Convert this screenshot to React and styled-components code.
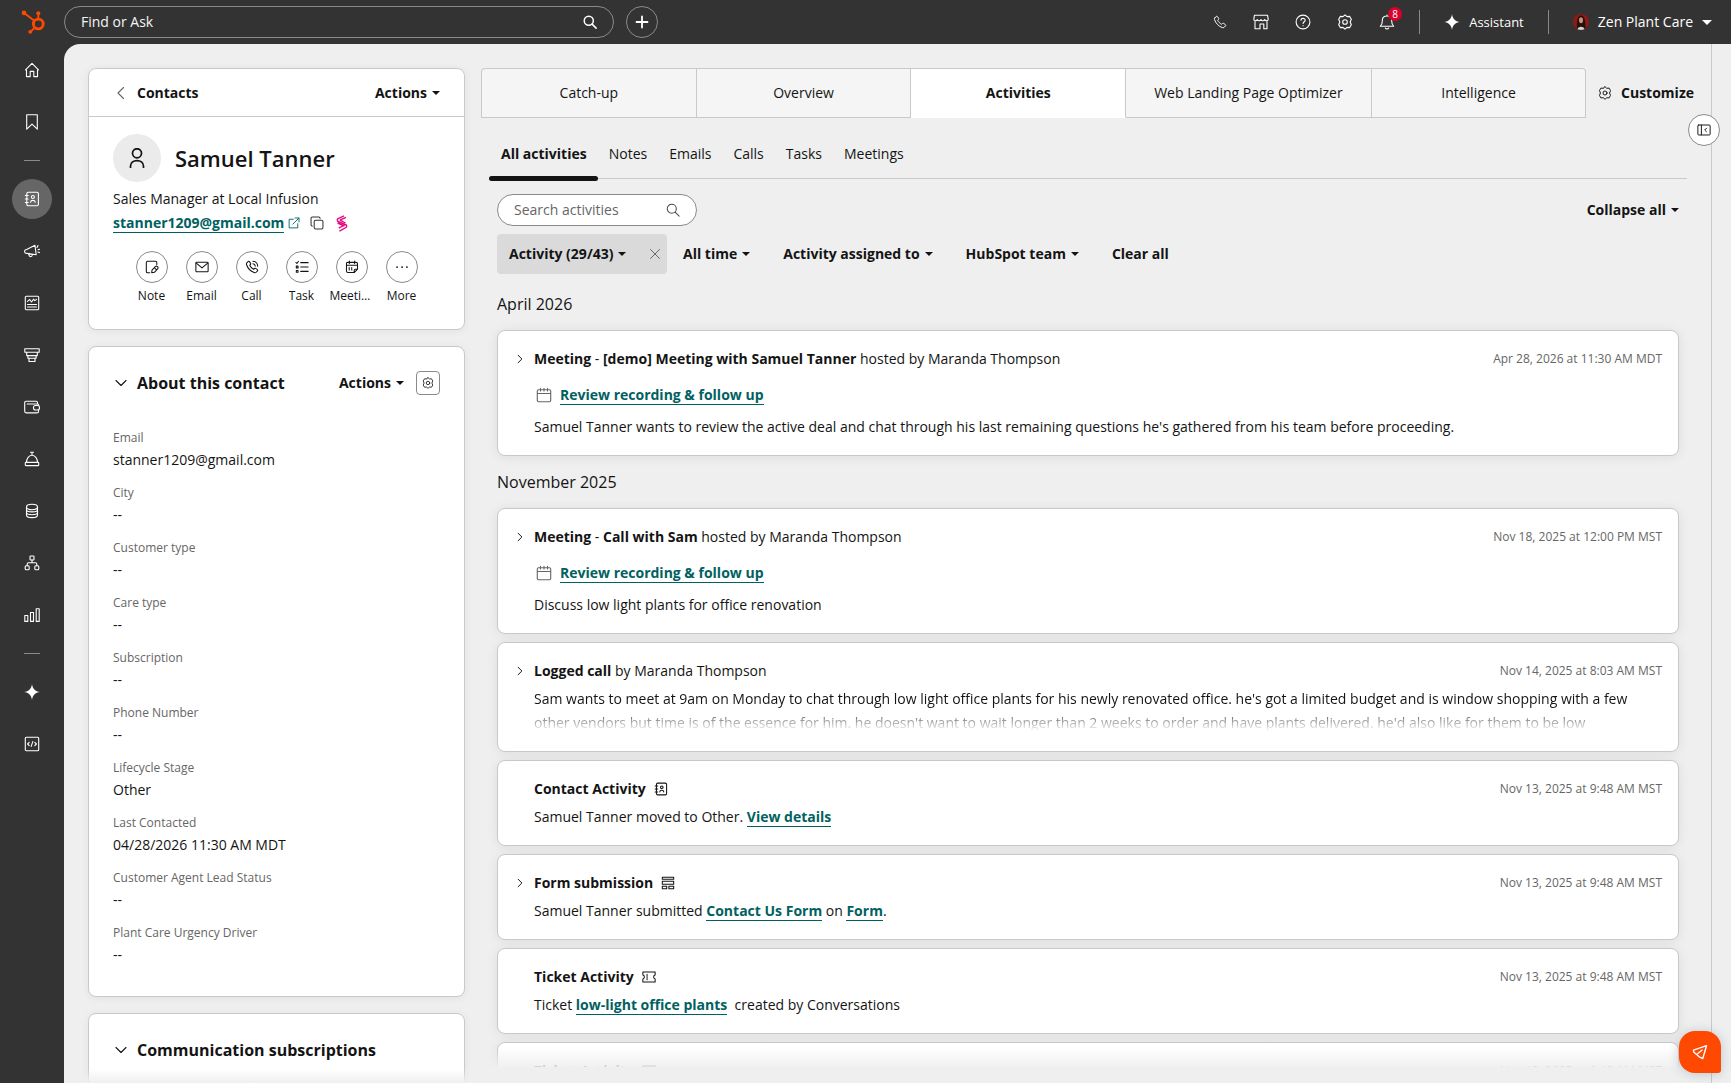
import React, { useState } from 'react'
import styled, { createGlobalStyle, css } from 'styled-components'

const GlobalStyle = createGlobalStyle`
    * {
        box-sizing: border-box;
    }
    body {
        margin: 0;
        background-color: #333;
        color: #141414;
        font: 400 14px/24px "Open Sans", "Noto Sans", sans-serif;
    }
    button, input {
        font: inherit;
        color: inherit;
    }
    button {
        padding: 0;
        border: 0;
        background: none;
        cursor: pointer;
    }
    h1, h2, h3, p, ul, dl, dd {
        margin: 0;
        padding: 0;
    }
    ul {
        list-style: none;
    }
`

const Svg = styled.svg`
    display: block;
    flex: none;
    fill: none;
    stroke: currentColor;
    stroke-width: ${({$stroke}) => $stroke || 1.1};
    stroke-linecap: round;
    stroke-linejoin: round;
`

const gearPath = 'M8 .8 L10 2.6 L12.7 2.4 L14.3 5.2 L13.2 8 L14.3 10.8 L12.7 13.6 L10 13.4 L8 15.2 L6 13.4 L3.3 13.6 L1.7 10.8 L2.8 8 L1.7 5.2 L3.3 2.4 L6 2.6 Z'
const sparklePath = 'M8 0 C8.6 4.8 11.2 7.4 16 8 C11.2 8.6 8.6 11.2 8 16 C7.4 11.2 4.8 8.6 0 8 C4.8 7.4 7.4 4.8 8 0 Z'
const phonePath = 'M2.1 3.3 L3.6 1.7 C4 1.3 4.6 1.3 5 1.8 L6.4 3.8 C6.7 4.2 6.6 4.7 6.3 5.1 L5.4 6.1 C6.2 7.9 7.8 9.6 9.8 10.6 L10.9 9.7 C11.3 9.4 11.8 9.3 12.2 9.6 L14.1 11 C14.6 11.4 14.7 12 14.3 12.4 L12.8 14 C12.2 14.6 11.3 14.7 10.5 14.4 C6.3 12.8 3.2 9.5 1.8 5.4 C1.5 4.6 1.6 3.9 2.1 3.3 Z'

// all glyphs share a 16x16 box
const icons = {
    home: <path d="M1.5 7.8 L8 1.3 L14.5 7.8 M2.5 8 V14.6 H6.2 V9.4 H9.8 V14.6 H13.5 V8"/>,
    bookmark: <path d="M2.7 .7 H13.3 V15.2 L8 10.2 L2.7 15.2 Z"/>,
    contacts: <><rect x="2.8" y="1.3" width="11.6" height="13.4" rx="1.5"/><path d="M1.3 4.5 H4.2 M1.3 8 H4.2 M1.3 11.5 H4.2"/><circle cx="8.9" cy="6" r="1.5"/><path d="M6.6 11.3 C6.8 8.7 11 8.7 11.2 11.3"/></>,
    megaphone: <><path d="M11 2.3 L3.1 6.2 L1.2 6.9 C.4 7.3 .4 9.8 1.6 10.1 L12.2 11.7 Z M4.3 10.6 L5.5 13.2 C6.3 13.9 7.7 13.6 8 12.9 L8.2 11.3"/><path d="M13 4.5 L14 2.5 M14 6.7 L15.5 6.2 M13.9 9 L15.5 9.6"/></>,
    report: <><rect x="1.3" y="1.3" width="13.4" height="13.4" rx="1"/><path d="M3.5 6.4 L5.7 4.5 L7.5 7 L9.5 4.2 L10.8 5.6 L12.6 4.4 M3.5 9.5 H12.5 M3.5 12 H12.5"/></>,
    funnel: <path d="M.8 1.8 H15.2 V5.2 H.8 Z M2.7 5.2 H13.3 V8.6 H2.7 Z M3.9 8.6 H12.1 V11.2 H3.9 Z M5 11.2 H11 V14.5 H5 Z"/>,
    wallet: <><path d="M13.5 5 V3.6 C13.5 2.7 13 2.2 12.1 2.2 H2.2 C1.2 2.2 .7 2.8 .7 3.6 V12.3 C.7 13.3 1.3 13.9 2.2 13.9 H13 C13.9 13.9 14.5 13.3 14.5 12.5 V11 M3.2 5 H13.5 C14.3 5 14.7 5.5 14.7 6.5"/><rect x="9.5" y="6.5" width="6" height="4.5" rx="2"/></>,
    service: <><path d="M2.5 11.4 C2.5 8 4.5 4.3 8 4.3 C11.5 4.3 13.5 8 13.5 11.4 M8 4.3 V1.3 M6.5 1.2 H9.5"/><rect x="1.3" y="11.4" width="13.4" height="3.2" rx=".7"/></>,
    database: <><ellipse cx="8" cy="4" rx="5.5" ry="2.7"/><path d="M2.5 4 V12 C2.5 15.5 13.5 15.5 13.5 12 V4 M2.5 6.8 C2.5 9.6 13.5 9.6 13.5 6.8 M2.5 9.6 C2.5 12.5 13.5 12.5 13.5 9.6"/></>,
    workflow: <><rect x="6" y="1" width="4" height="4" rx=".7"/><rect x="1.2" y="10.8" width="4" height="4" rx="1"/><rect x="10.8" y="10.8" width="4" height="4" rx="1"/><path d="M8 5 V7.8 M3.2 10.8 V9.2 C3.2 8.3 3.6 7.8 4.5 7.8 H11.5 C12.4 7.8 12.8 8.3 12.8 9.2 V10.8"/></>,
    bars: <path d="M.8 8.5 H3.8 V14.4 H.8 Z M6.5 5.5 H9.5 V14.4 H6.5 Z M12.2 1.8 H15.2 V14.4 H12.2 Z"/>,
    sparkle: <path d={sparklePath} fill="currentColor" stroke="none"/>,
    code: <><rect x="1.3" y="1.3" width="13.4" height="13.4" rx="1"/><path d="M5.2 6.3 L3.6 8 L5.2 9.7 M10.8 6.3 L12.4 8 L10.8 9.7 M8.8 5.6 L7.2 10.4"/></>,
    phone: <path d={phonePath}/>,
    call: <><path d={phonePath}/><path d="M9 1.5 C12 1.6 14.3 3.9 14.5 7 M9 4.3 C10.5 4.5 11.5 5.5 11.7 7"/></>,
    store: <path d="M1.5 1.2 H14.5 L15.2 5.2 C15.2 7.2 12.2 7.2 11.7 5.5 C11.2 7.2 8.5 7.2 8 5.5 C7.5 7.2 4.8 7.2 4.3 5.5 C3.8 7.2 .8 7.2 .8 5.2 Z M2 7.5 V14.7 H7 V10 H10.8 V14.7 H14 V7.5"/>,
    help: <><circle cx="8" cy="8" r="6.9"/><path d="M6 6.3 C6 3.7 10.2 3.8 10.2 6.2 C10.2 7.8 8.1 7.8 8.1 9.5 M8.1 11.6 V11.7"/></>,
    gear: <><path d={gearPath}/><circle cx="8" cy="8" r="2.3"/></>,
    bell: <><path d="M1.3 12.3 C3.5 10.8 3.3 9 3.3 6.5 C3.3 3.8 5.2 2 8 2 C10.8 2 12.7 3.8 12.7 6.5 C12.7 9 12.5 10.8 14.7 12.3 Z M8 2 V1 M6.3 14 C7 15.2 9 15.2 9.7 14"/></>,
    search: <><circle cx="6.6" cy="6.6" r="5.2"/><path d="M10.4 10.4 L15 15"/></>,
    plus: <path d="M8 2.5 V13.5 M2.500 8 H13.5"/>,
    back: <path d="M10.5 2.5 L5 8 L10.5 13.5"/>,
    next: <path d="M5.5 3 L10.5 8 L5.5 13"/>,
    down: <path d="M3 5.5 L8 10.5 L13 5.5"/>,
    close: <path d="M2 2 L14 14 M14 2 L2 14"/>,
    person: <><ellipse cx="8" cy="4.2" rx="3.6" ry="3.6"/><path d="M2.8 15.5 V14.5 C2.8 8.5 13.2 8.5 13.2 14.5 V15.5"/></>,
    external: <path d="M7 3 H1.5 V14.5 H13 V9 M6.5 9.5 L14.5 1.5 M9.5 1.3 H14.7 V6.5"/>,
    copy: <><rect x="4.8" y="4.8" width="10" height="10" rx="1.6"/><path d="M2.7 11.5 C1.7 11.5 1.2 11 1.2 10 V2.7 C1.2 1.7 1.7 1.2 2.7 1.2 H10 C11 1.2 11.5 1.7 11.5 2.7"/></>,
    note: <><path d="M13.5 5 V3 C13.5 2 13 1.5 12 1.5 H3 C2 1.5 1.5 2 1.5 3 V13 C1.5 14 2 14.5 3 14.5 H5.5"/><path d="M8 11.5 L12 7.3 C13.6 6.4 15.6 8.3 14.7 9.9 L10.7 14.1 L7.700 14.6 Z M10.6 8.7 L13.3 11.4"/></>,
    email: <><rect x="1" y="2.5" width="14" height="11" rx="1"/><path d="M1.5 3.5 L8 9 L14.5 3.5"/></>,
    task: <><path d="M6.5 3 H15 M6.5 8 H15 M6.5 13 H15 M1 2.8 L2.2 4 L4 1.5"/><rect x="1.5" y="7" width="2" height="2"/><rect x="1.5" y="12" width="2" height="2"/></>,
    meeting: <><path d="M10.5 14.3 H3.3 C2.2 14.3 1.7 13.7 1.7 12.7 V4.3 C1.7 3.3 2.2 2.7 3.3 2.7 H12.7 C13.8 2.7 14.3 3.3 14.3 4.3 V10.5 L10.5 14.3 V11.8 C10.5 10.9 11 10.5 11.8 10.5 H14.3 M1.7 6 H14.3 M5 1.2 V4 M11 1.2 V4 M4.8 8.7 V11.5 M7.7 8.7 V11.5"/></>,
    more: <path d="M2.3 8 H2.4 M8 8 H8.1 M13.6 8 H13.7" strokeWidth="2"/>,
    calendar: <path d="M2.5 2.7 H13.5 C14.3 2.7 14.7 3 14.7 4 V13.5 C14.7 14.3 14.3 14.7 13.5 14.7 H2.5 C1.7 14.7 1.3 14.3 1.3 13.5 V4 C1.3 3 1.7 2.7 2.5 2.7 M1.3 6.5 H14.7 M4.5 1.3 V4 M8 1.3 V4 M11.5 1.3 V4"/>,
    form: <path d="M1.5 1.5 H14.5 V3.8 H1.5 Z M1.5 6 H14.5 V9.5 H1.5 Z M1.5 11.8 H6.5 V14.5 H1.5 Z M9 11.8 H14.5 V14.5 H9 Z"/>,
    ticket: <path d="M1 2.3 H15 V5.8 C12.7 6.3 12.7 9.7 15 10.2 V13.7 H1 V10.2 C3.3 9.7 3.3 6.3 1 5.8 Z M5.8 5 V6.2 M5.8 7.5 V8.5 M5.8 9.8 V11"/>,
    collapse: <><rect x="1" y="2.3" width="14" height="11.4" rx="1"/><path d="M5 2.5 V13.5 M10.8 6 L8.8 8 L10.8 10"/></>,
    send: <path d="M1.5 6.2 L14.5 1.7 L10.8 14.5 L7.7 13.2 L5.5 11.3 L1.7 8 Z M10.2 6 L5.8 9.5"/>
}

const Icon = ({name, size = 16, stroke}) => (
    <Svg width={size} height={size} viewBox="0 0 16 16" $stroke={stroke} aria-hidden="true">
        {icons[name]}
    </Svg>
)

const Caret = ({size = 8}) => (
    <svg width={size} height={size / 2} viewBox="0 0 8 4" aria-hidden="true">
        <path d="M0 0 H8 L4 4 Z" fill="currentColor"/>
    </svg>
)

const Page = styled.div`
    display: flex;
    flex-direction: column;
    height: 100vh;
    overflow: hidden;
`

const TopBar = styled.header`
    display: flex;
    align-items: center;
    flex: none;
    height: 44px;
    padding-right: 19px;
    color: #fff;
`

const LogoLink = styled.a`
    display: flex;
    justify-content: center;
    width: 64px;
    padding-left: 2px;
    color: #ff4800;
`

const GlobalSearch = styled.label`
    display: flex;
    align-items: center;
    width: 550px;
    height: 32px;
    padding: 0 16px;
    border: 1px solid #8a8a8a;
    border-radius: 16px;
    input {
        flex: 1;
        min-width: 0;
        padding: 0;
        border: 0;
        outline: 0;
        background: none;
    }
    input::placeholder {
        color: #f5f5f5;
        opacity: 1;
    }
`

const AddButton = styled.button`
    display: flex;
    align-items: center;
    justify-content: center;
    width: 32px;
    height: 32px;
    margin-left: 12px;
    border: 1px solid #8a8a8a;
    border-radius: 50%;
`

const TopActions = styled.div`
    display: flex;
    align-items: center;
    gap: 24px;
    margin-left: auto;
`

const TopIcons = styled.div`
    display: flex;
    align-items: center;
    gap: 26px;
`

const TopButton = styled.button`
    position: relative;
    display: flex;
    align-items: center;
    gap: 9px;
    font-size: ${({$small}) => $small ? '13px' : '14px'};
`

const Badge = styled.span`
    position: absolute;
    top: -7px;
    right: -7px;
    width: 14px;
    height: 14px;
    border-radius: 50%;
    background-color: #d9002b;
    font-size: 10px;
    line-height: 14px;
    text-align: center;
`

const TopDivider = styled.span`
    width: 1px;
    height: 24px;
    background-color: #8a8a8a;
`

const Body = styled.div`
    display: flex;
    flex: 1;
    min-height: 0;
`

const SideNav = styled.nav`
    display: flex;
    flex-direction: column;
    align-items: center;
    flex: none;
    gap: 12px;
    width: 64px;
    padding-top: 6px;
    color: #fff;
`

const NavLink = styled.a`
    display: flex;
    align-items: center;
    justify-content: center;
    width: 40px;
    height: 40px;
    border-radius: 50%;
    color: inherit;
    background-color: ${({$active}) => $active ? '#666' : 'transparent'};
`

const NavDivider = styled.span`
    width: 16px;
    height: 1px;
    margin: 6px 0;
    background-color: #8a8a8a;
`

const Content = styled.div`
    position: relative;
    display: flex;
    flex: 1;
    min-width: 0;
    border-top-left-radius: 16px;
    background-color: #efefef;
    overflow: hidden;
`

const ContactColumn = styled.aside`
    position: relative;
    display: flex;
    flex-direction: column;
    flex: none;
    gap: 16px;
    width: 417px;
    padding: 24px 16px 0 24px;
    overflow: hidden;
`

const Panel = styled.section`
    flex: none;
    border: 1px solid #c9c9c9;
    border-radius: 8px;
    background-color: #fff;
    box-shadow: 0 1px 8px rgba(20, 20, 20, .06);
`

const PanelTop = styled.div`
    display: flex;
    align-items: center;
    justify-content: space-between;
    height: 48px;
    padding: 0 24px;
    border-bottom: 1px solid #c9c9c9;
`

const BackLink = styled.a`
    display: flex;
    align-items: center;
    gap: 8px;
    color: inherit;
    font-weight: 700;
    text-decoration: none;
    svg {
        color: #666;
    }
`

const MenuButton = styled.button`
    display: inline-flex;
    align-items: center;
    gap: 5px;
    font-weight: 700;
    white-space: nowrap;
`

const Profile = styled.div`
    padding: 17px 24px 23px;
`

const NameRow = styled.div`
    display: flex;
    align-items: center;
    gap: 14px;
    margin-bottom: 5px;
`

const Avatar = styled.div`
    display: flex;
    align-items: center;
    justify-content: center;
    width: 48px;
    height: 48px;
    border-radius: 50%;
    background-color: #ebebeb;
`

const Name = styled.h1`
    font-size: 22px;
    font-weight: 600;
    line-height: 32px;
`

const EmailRow = styled.div`
    display: flex;
    align-items: center;
    height: 24px;
    color: #006162;
`

const Link = styled.a`
    border-bottom: 1px solid currentColor;
    color: #006162;
    font-weight: 700;
    line-height: 18px;
    text-decoration: none;
`

const IconButton = styled.button`
    display: flex;
    margin-left: ${({$gap}) => $gap || '0'};
    color: ${({$color}) => $color || 'inherit'};
`

const QuickActions = styled.div`
    display: flex;
    justify-content: center;
    margin-top: 16px;
`

const QuickAction = styled.button`
    display: flex;
    flex-direction: column;
    align-items: center;
    gap: 3px;
    width: 50px;
    font-size: 12px;
    line-height: 20px;
    span {
        max-width: 44px;
        overflow: hidden;
        text-overflow: ellipsis;
        white-space: nowrap;
    }
`

const Circle = styled.i`
    display: flex;
    align-items: center;
    justify-content: center;
    width: 32px;
    height: 32px;
    border: 1px solid #8a8a8a;
    border-radius: 50%;
    background-color: #fff;
`

const PanelHeader = styled.div`
    display: flex;
    align-items: center;
    gap: 12px;
    padding: 24px 24px 0;
`

const PanelTitle = styled.h2`
    flex: 1;
    font-size: 16px;
    font-weight: 700;
    line-height: 24px;
    button {
        display: flex;
        align-items: center;
        gap: 8px;
    }
`

const SquareButton = styled.button`
    display: flex;
    align-items: center;
    justify-content: center;
    width: 24px;
    height: 24px;
    border: 1px solid #8a8a8a;
    border-radius: 4px;
`

const Fields = styled.dl`
    display: flex;
    flex-direction: column;
    gap: 11px;
    padding: 33px 24px 29px;
    dt {
        color: #666;
        font-size: 12px;
        line-height: 20px;
    }
`

const Fade = styled.div`
    position: absolute;
    left: 0;
    right: 0;
    bottom: 0;
    height: 14px;
    background: linear-gradient(rgba(239, 239, 239, 0), #efefef);
    pointer-events: none;
`

const TimelineFade = styled(Fade)`
    height: 36px;
    background: linear-gradient(rgba(239, 239, 239, 0), rgba(239, 239, 239, .9) 20px, #efefef 20px);
`

const TimelineColumn = styled.main`
    position: relative;
    flex: 1;
    min-width: 0;
    padding-top: 24px;
    overflow: hidden;
`

const TabsRow = styled.div`
    display: flex;
    align-items: center;
    gap: 12px;
    padding-right: 17px;
`

const Tabs = styled.div`
    display: flex;
    flex: 1;
    height: 50px;
    border-left: 1px solid #c9c9c9;
    border-radius: 4px 4px 0 0;
`

const Tab = styled.button`
    flex: 1 1 0;
    padding: 0 28px;
    border: 1px solid #c9c9c9;
    border-left: 0;
    background-color: #f5f5f5;
    white-space: nowrap;
    &:first-child {
        border-top-left-radius: 4px;
    }
    &:last-child {
        border-top-right-radius: 4px;
    }
    ${({$active}) => $active && css`
        border-bottom-color: #fff;
        background-color: #fff;
        font-weight: 700;
    `}
`

const SubTabs = styled.div`
    display: flex;
    margin: 18px 24px 0 8px;
    border-bottom: 1px solid #c9c9c9;
`

const SubTab = styled.button`
    position: relative;
    height: 42px;
    padding: 0 11px 6px;
    &:first-child {
        padding-left: 12px;
    }
    ${({$active}) => $active && css`
        font-weight: 700;
        &::after {
            content: '';
            position: absolute;
            left: 0;
            right: 0;
            bottom: -3px;
            height: 5px;
            border-radius: 3px;
            background-color: #141414;
        }
    `}
`

const Timeline = styled.div`
    padding: 15px 32px 0 16px;
`

const SearchRow = styled.div`
    display: flex;
    align-items: center;
    justify-content: space-between;
    margin-bottom: 8px;
`

const SearchBox = styled.label`
    display: flex;
    align-items: center;
    width: 200px;
    height: 32px;
    padding: 0 16px;
    border: 1px solid #8a8a8a;
    border-radius: 16px;
    background-color: #fff;
    color: #4a4a4a;
    input {
        flex: 1;
        min-width: 0;
        padding: 0;
        border: 0;
        outline: 0;
        background: none;
    }
    input::placeholder {
        color: #666;
        opacity: 1;
    }
`

const FilterRow = styled.div`
    display: flex;
    align-items: center;
    gap: 33px;
    margin-bottom: 18px;
`

const FilterChip = styled.div`
    display: flex;
    align-items: center;
    justify-content: space-between;
    width: 170px;
    height: 40px;
    margin-right: -17px;
    padding: 0 6px 0 12px;
    border-radius: 4px;
    background-color: #dadada;
`

const Month = styled.h3`
    margin-bottom: 14px;
    font-size: 16px;
    font-weight: 400;
`

const ActivityList = styled.ul`
    display: flex;
    flex-direction: column;
    gap: 8px;
    margin-bottom: 14px;
`

const Activity = styled.li`
    display: flex;
    gap: 8px;
    padding: 16px;
    border: 1px solid #c9c9c9;
    border-radius: 8px;
    background-color: #fff;
    box-shadow: 0 1px 12px rgba(20, 20, 20, .08);
`

const Toggle = styled.div`
    display: flex;
    align-items: center;
    width: 12px;
    height: 24px;
`

const ActivityBody = styled.div`
    flex: 1;
    min-width: 0;
`

const ActivityHeader = styled.div`
    display: flex;
    align-items: center;
    gap: 8px;
    margin-bottom: 4px;
    time {
        margin-left: auto;
        color: #666;
        font-size: 12px;
    }
`

const RecordingLink = styled.div`
    display: flex;
    align-items: center;
    gap: 8px;
    height: 24px;
    margin: 12px 0 8px 2px;
    svg {
        color: #666;
    }
`

const Clamped = styled.p`
    height: 48px;
    overflow: hidden;
    mask-image: linear-gradient(#000 40%, transparent 92%);
`

const Rail = styled.div`
    flex: none;
    width: 20px;
    border-left: 1px solid #c9c9c9;
`

const RailButton = styled.button`
    position: absolute;
    top: 70px;
    right: 11px;
`

const ChatButton = styled.button`
    position: absolute;
    right: 10px;
    bottom: 10px;
    display: flex;
    align-items: center;
    justify-content: center;
    width: 42px;
    height: 42px;
    border-radius: 16px 16px 3px 16px;
    background-color: #ff4800;
    box-shadow: 0 1px 12px rgba(45, 80, 100, .25);
    color: #fff;
`

const Logo = () => (
    <svg width="24" height="24" viewBox="0 0 24 24" fill="none" stroke="currentColor" role="img" aria-label="HubSpot">
        <circle cx="17.3" cy="14" r="4.9" strokeWidth="2.9"/>
        <path d="M17.3 8 V4 M13 10.5 L3.5 3.2 M13.8 17.5 L9.5 21.8" strokeWidth="1.9"/>
        <g fill="currentColor" stroke="none">
            <circle cx="17.3" cy="3.3" r="2"/>
            <circle cx="3" cy="2.9" r="2.3"/>
            <circle cx="9.2" cy="21.8" r="1.9"/>
        </g>
    </svg>
)

const PinkMark = () => (
    <svg width="12" height="17" viewBox="0 0 12 17" fill="none" stroke="#e5097f" strokeWidth="1.4" aria-hidden="true">
        <path d="M1.2 4.2 L8 .8 M4 5.2 L10 2.4 M2.8 13.2 L8.4 10 M3.4 16.2 L10.8 12"/>
        <path d="M1.2 4.2 L1.6 6.2 L10.4 10 L10.8 12 M4 5.2 L9.500 8 M1.6 8 L8.4 11"/>
    </svg>
)

const UserPhoto = () => (
    <svg width="16" height="16" viewBox="0 0 16 16" aria-hidden="true">
        <clipPath id="photo"><circle cx="8" cy="8" r="8"/></clipPath>
        <g clipPath="url(#photo)">
            <rect width="16" height="16" fill="#8c1c13"/>
            <path d="M4 16 C3.5 8 4 1.5 8 1.5 C12 1.5 12.5 8 12.5 16 Z" fill="#24100d"/>
            <ellipse cx="8" cy="6.3" rx="2" ry="3" fill="#c98f78"/>
            <path d="M4 16 C5 11.5 11 11.5 12 16 Z" fill="#d8d0cb"/>
        </g>
    </svg>
)

const navItems = [
    ['home', 'Home'],
    ['bookmark', 'Bookmarks'],
    null,
    ['contacts', 'CRM'],
    ['megaphone', 'Marketing'],
    ['report', 'Content'],
    ['funnel', 'Sales'],
    ['wallet', 'Commerce'],
    ['service', 'Service'],
    ['database', 'Data management'],
    ['workflow', 'Automation'],
    ['bars', 'Reporting'],
    null,
    ['sparkle', 'Breeze'],
    ['code', 'Development']
]

const quickActions = [
    ['note', 'Note'],
    ['email', 'Email'],
    ['call', 'Call'],
    ['task', 'Task'],
    ['meeting', 'Meeting'],
    ['more', 'More']
]

const fields = [
    ['Email', 'stanner1209@gmail.com'],
    ['City', '--'],
    ['Customer type', '--'],
    ['Care type', '--'],
    ['Subscription', '--'],
    ['Phone Number', '--'],
    ['Lifecycle Stage', 'Other'],
    ['Last Contacted', '04/28/2026 11:30 AM MDT'],
    ['Customer Agent Lead Status', '--'],
    ['Plant Care Urgency Driver', '--']
]

const tabs = ['Catch-up', 'Overview', 'Activities', 'Web Landing Page Optimizer', 'Intelligence']
const subTabs = ['All activities', 'Notes', 'Emails', 'Calls', 'Tasks', 'Meetings']
const filters = ['All time', 'Activity assigned to', 'HubSpot team']

const ActivityCard = ({title, icon, date, expandable, children}) => (
    <Activity>
        <Toggle>
            {expandable && <IconButton aria-label="Expand"><Icon name="next" size={12} stroke={1.3}/></IconButton>}
        </Toggle>
        <ActivityBody>
            <ActivityHeader>
                <span>{title}</span>
                {icon && <Icon name={icon} size={14} stroke={1.2}/>}
                <time>{date}</time>
            </ActivityHeader>
            {children}
        </ActivityBody>
    </Activity>
)

const Recording = () => (
    <RecordingLink>
        <Icon name="calendar"/>
        <Link href="#recording">Review recording &amp; follow up</Link>
    </RecordingLink>
)

const Header = () => (
    <TopBar>
        <LogoLink href="#home"><Logo/></LogoLink>
        <GlobalSearch>
            <input type="text" placeholder="Find or Ask" aria-label="Find or Ask"/>
            <Icon name="search" size={14} stroke={1.7}/>
        </GlobalSearch>
        <AddButton aria-label="Create"><Icon name="plus" stroke={1.8}/></AddButton>
        <TopActions>
            <TopIcons>
                <TopButton aria-label="Calling"><Icon name="phone" size={14}/></TopButton>
                <TopButton aria-label="Marketplace"><Icon name="store"/></TopButton>
                <TopButton aria-label="Help"><Icon name="help"/></TopButton>
                <TopButton aria-label="Settings"><Icon name="gear"/></TopButton>
                <TopButton aria-label="Notifications">
                    <Icon name="bell"/>
                    <Badge>8</Badge>
                </TopButton>
            </TopIcons>
            <TopDivider/>
            <TopButton $small><Icon name="sparkle"/>Assistant</TopButton>
            <TopDivider/>
            <TopButton><UserPhoto/>Zen Plant Care <Caret size={10}/></TopButton>
        </TopActions>
    </TopBar>
)

const ContactSidebar = () => (
    <ContactColumn>
        <Panel>
            <PanelTop>
                <BackLink href="#contacts"><Icon name="back"/>Contacts</BackLink>
                <MenuButton>Actions <Caret/></MenuButton>
            </PanelTop>
            <Profile>
                <NameRow>
                    <Avatar><Icon name="person" size={20} stroke={1.4}/></Avatar>
                    <Name>Samuel Tanner</Name>
                </NameRow>
                <p>Sales Manager at Local Infusion</p>
                <EmailRow>
                    <Link href="#email">stanner1209@gmail.com</Link>
                    <IconButton $gap="4px" aria-label="Open"><Icon name="external" size={12} stroke={1.2}/></IconButton>
                    <IconButton $gap="10px" $color="#333" aria-label="Copy"><Icon name="copy" size={14} stroke={1.2}/></IconButton>
                    <IconButton $gap="12px" aria-label="Extension"><PinkMark/></IconButton>
                </EmailRow>
                <QuickActions>
                    {quickActions.map(([icon, label]) => (
                        <QuickAction key={label}>
                            <Circle><Icon name={icon} size={14} stroke={1.2}/></Circle>
                            <span>{label}</span>
                        </QuickAction>
                    ))}
                </QuickActions>
            </Profile>
        </Panel>
        <Panel>
            <PanelHeader>
                <PanelTitle><button><Icon name="down"/>About this contact</button></PanelTitle>
                <MenuButton>Actions <Caret/></MenuButton>
                <SquareButton aria-label="Settings"><Icon name="gear" size={12}/></SquareButton>
            </PanelHeader>
            <Fields>
                {fields.map(([label, value]) => (
                    <div key={label}>
                        <dt>{label}</dt>
                        <dd>{value}</dd>
                    </div>
                ))}
            </Fields>
        </Panel>
        <Panel>
            <PanelHeader>
                <PanelTitle><button><Icon name="down"/>Communication subscriptions</button></PanelTitle>
            </PanelHeader>
            <Fields/>
        </Panel>
        <Fade/>
    </ContactColumn>
)

const Activities = () => (
    <Timeline>
        <SearchRow>
            <SearchBox>
                <input type="text" placeholder="Search activities" aria-label="Search activities"/>
                <Icon name="search" size={14} stroke={1.2}/>
            </SearchBox>
            <MenuButton>Collapse all <Caret/></MenuButton>
        </SearchRow>
        <FilterRow>
            <FilterChip>
                <MenuButton>Activity (29/43) <Caret/></MenuButton>
                <IconButton $color="#666" aria-label="Remove filter"><Icon name="close" size={12} stroke={1.3}/></IconButton>
            </FilterChip>
            {filters.map(name => <MenuButton key={name}>{name} <Caret/></MenuButton>)}
            <MenuButton>Clear all</MenuButton>
        </FilterRow>

        <Month>April 2026</Month>
        <ActivityList>
            <ActivityCard
                expandable
                title={<><b>Meeting</b> - <b>[demo] Meeting with Samuel Tanner</b> hosted by Maranda Thompson</>}
                date="Apr 28, 2026 at 11:30 AM MDT">
                <Recording/>
                <p>Samuel Tanner wants to review the active deal and chat through his last remaining questions he's gathered from his team before proceeding.</p>
            </ActivityCard>
        </ActivityList>

        <Month>November 2025</Month>
        <ActivityList>
            <ActivityCard
                expandable
                title={<><b>Meeting</b> - <b>Call with Sam</b> hosted by Maranda Thompson</>}
                date="Nov 18, 2025 at 12:00 PM MST">
                <Recording/>
                <p>Discuss low light plants for office renovation</p>
            </ActivityCard>
            <ActivityCard
                expandable
                title={<><b>Logged call</b> by Maranda Thompson</>}
                date="Nov 14, 2025 at 8:03 AM MST">
                <Clamped>
                    Sam wants to meet at 9am on Monday to chat through low light office plants for his newly renovated office. he's got a limited budget and is window shopping with a few other vendors but time is of the essence for him. he doesn't want to wait longer than 2 weeks to order and have plants delivered. he'd also like for them to be low
                </Clamped>
            </ActivityCard>
            <ActivityCard title={<b>Contact Activity</b>} icon="contacts" date="Nov 13, 2025 at 9:48 AM MST">
                <p>Samuel Tanner moved to Other. <Link href="#details">View details</Link></p>
            </ActivityCard>
            <ActivityCard expandable title={<b>Form submission</b>} icon="form" date="Nov 13, 2025 at 9:48 AM MST">
                <p>Samuel Tanner submitted <Link href="#contact-form">Contact Us Form</Link> on <Link href="#form">Form</Link>.</p>
            </ActivityCard>
            <ActivityCard title={<b>Ticket Activity</b>} icon="ticket" date="Nov 13, 2025 at 9:48 AM MST">
                <p>Ticket <Link href="#ticket">low-light office plants</Link>&nbsp; created by Conversations</p>
            </ActivityCard>
            <ActivityCard title={<b>Ticket Activity</b>} icon="ticket" date="Nov 13, 2025 at 9:48 AM MST"/>
        </ActivityList>
    </Timeline>
)

export default function App() {
    const [tab, setTab] = useState('Activities')
    const [subTab, setSubTab] = useState('All activities')

    return (
        <Page>
            <GlobalStyle/>
            <Header/>
            <Body>
                <SideNav>
                    {navItems.map((item, i) => item
                        ? <NavLink key={i} href={`#${item[0]}`} aria-label={item[1]} $active={item[0] === 'contacts'}>
                            <Icon name={item[0]}/>
                        </NavLink>
                        : <NavDivider key={i}/>
                    )}
                </SideNav>
                <Content>
                    <ContactSidebar/>
                    <TimelineColumn>
                        <TabsRow>
                            <Tabs>
                                {tabs.map(name => (
                                    <Tab key={name} $active={name === tab} onClick={() => setTab(name)}>{name}</Tab>
                                ))}
                            </Tabs>
                            <MenuButton><Icon name="gear" size={14}/>&nbsp;Customize</MenuButton>
                        </TabsRow>
                        <SubTabs>
                            {subTabs.map(name => (
                                <SubTab key={name} $active={name === subTab} onClick={() => setSubTab(name)}>{name}</SubTab>
                            ))}
                        </SubTabs>
                        <Activities/>
                        <TimelineFade/>
                    </TimelineColumn>
                    <Rail/>
                    <RailButton aria-label="Open sidebar"><Circle><Icon name="collapse" size={14}/></Circle></RailButton>
                    <ChatButton aria-label="Chat"><Icon name="send" stroke={1.4}/></ChatButton>
                </Content>
            </Body>
        </Page>
    )
}
